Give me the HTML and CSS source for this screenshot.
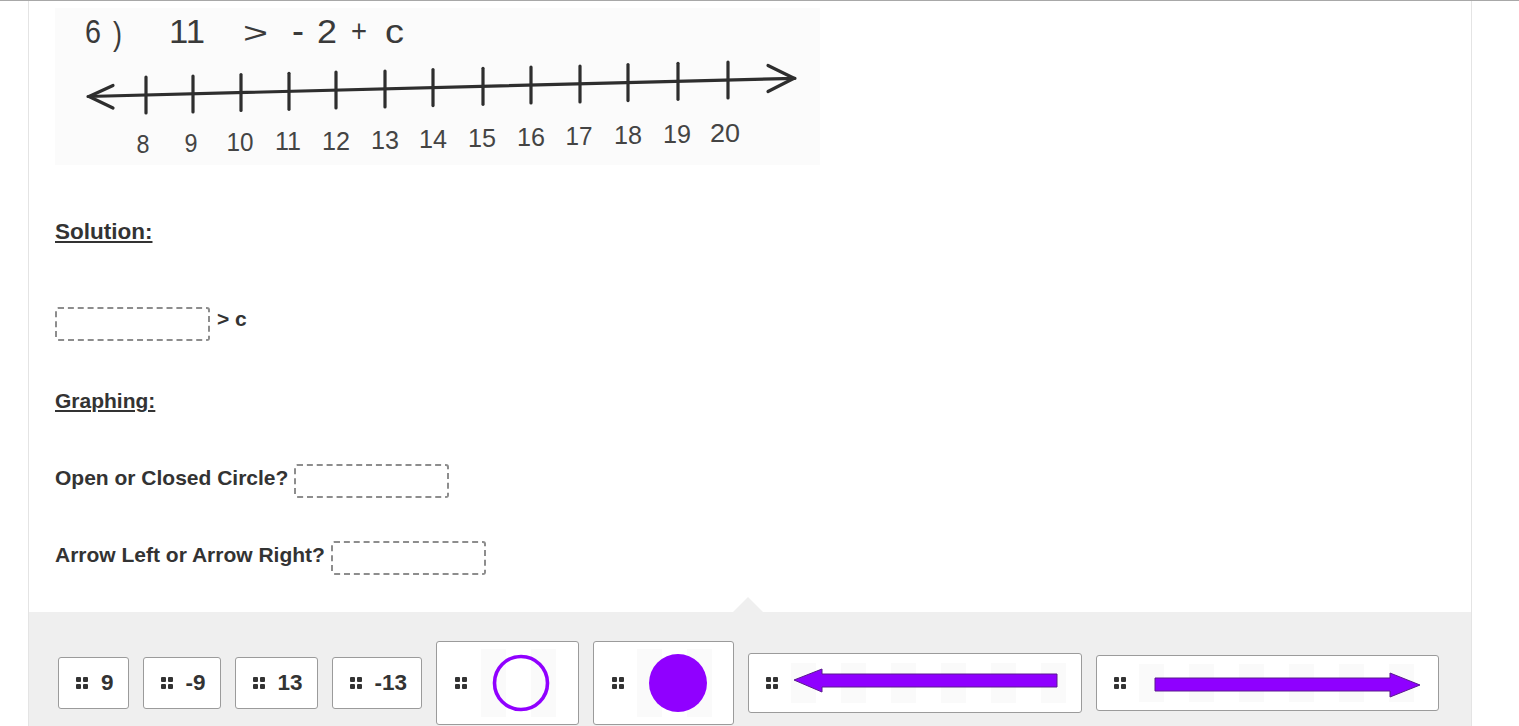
FILE: index.html
```html
<!DOCTYPE html>
<html>
<head>
<meta charset="utf-8">
<link rel="stylesheet" href="styles.css">
</head>
<body>
<div class="page">
  <div class="panel">
    <div class="content">
      <svg class="numline" width="765" height="157" viewBox="0 0 765 157">
        <rect x="0" y="0" width="765" height="157" fill="#fbfbfb"/>
        <g font-family="Liberation Sans, Arial, sans-serif" fill="#3a3a3a">
          <text x="30" y="35" font-size="34" textLength="16" lengthAdjust="spacingAndGlyphs">6</text>
          <text x="58" y="37" font-size="34" textLength="9" lengthAdjust="spacingAndGlyphs">)</text>
          <text x="114" y="35" font-size="34" textLength="36" lengthAdjust="spacingAndGlyphs">11</text>
          <text x="188" y="35" font-size="30" textLength="25" lengthAdjust="spacingAndGlyphs">&gt;</text>
          <text x="237" y="35" font-size="36">-</text>
          <text x="262" y="35" font-size="34" textLength="20" lengthAdjust="spacingAndGlyphs">2</text>
          <text x="296" y="34" font-size="32" textLength="16" lengthAdjust="spacingAndGlyphs">+</text>
          <text x="330" y="35" font-size="34" textLength="19" lengthAdjust="spacingAndGlyphs">c</text>
        </g>
        <g stroke="#2e2e2e" stroke-width="3.2" fill="none" stroke-linecap="round" stroke-linejoin="round">
          <path d="M33 88.5 L740 70.3"/>
          <path d="M58 77.5 L34 88.5 L58 100"/>
          <path d="M713 57.5 L739 70.3 L713 83.5"/>
          <path d="M91 69 V105"/>
          <path d="M138 68 V104"/>
          <path d="M186 66.5 V102.5"/>
          <path d="M234 65.3 V101.3"/>
          <path d="M281 64 V100"/>
          <path d="M330 63 V99"/>
          <path d="M378 61.6 V97.6"/>
          <path d="M428 60.3 V96.3"/>
          <path d="M476 59 V95"/>
          <path d="M525 58 V94"/>
          <path d="M573 56.6 V92.6"/>
          <path d="M623 55.3 V91.3"/>
          <path d="M673 54 V90"/>
        </g>
        <g font-family="Liberation Sans, Arial, sans-serif" font-size="26" fill="#444" text-anchor="middle">
          <text x="88" y="145" textLength="13" lengthAdjust="spacingAndGlyphs">8</text>
          <text x="136" y="144" textLength="13" lengthAdjust="spacingAndGlyphs">9</text>
          <text x="185" y="143" textLength="27" lengthAdjust="spacingAndGlyphs">10</text>
          <text x="233" y="142" textLength="26" lengthAdjust="spacingAndGlyphs">11</text>
          <text x="281" y="141.5" textLength="28" lengthAdjust="spacingAndGlyphs">12</text>
          <text x="330" y="140.5" textLength="28" lengthAdjust="spacingAndGlyphs">13</text>
          <text x="378" y="139.5" textLength="28" lengthAdjust="spacingAndGlyphs">14</text>
          <text x="427" y="138.5" textLength="28" lengthAdjust="spacingAndGlyphs">15</text>
          <text x="476" y="137.5" textLength="28" lengthAdjust="spacingAndGlyphs">16</text>
          <text x="524" y="136.5" textLength="27" lengthAdjust="spacingAndGlyphs">17</text>
          <text x="573" y="135.5" textLength="28" lengthAdjust="spacingAndGlyphs">18</text>
          <text x="622" y="134.5" textLength="28" lengthAdjust="spacingAndGlyphs">19</text>
          <text x="670" y="133.5" textLength="30" lengthAdjust="spacingAndGlyphs">20</text>
        </g>
      </svg>

      <div class="heading solution">Solution:</div>

      <div class="row row-solution">
        <span class="dropbox"></span>
        <span class="label after">&gt; c</span>
      </div>

      <div class="heading graphing">Graphing:</div>

      <div class="row row-open">
        <span class="label">Open or Closed Circle?</span>
        <span class="dropbox"></span>
      </div>

      <div class="row row-arrow">
        <span class="label">Arrow Left or Arrow Right?</span>
        <span class="dropbox"></span>
      </div>
    </div>

    <div class="tray">
      <div class="token text-token"><span class="grip"><i></i><i></i><i></i><i></i></span><span class="val">9</span></div>
      <div class="token text-token"><span class="grip"><i></i><i></i><i></i><i></i></span><span class="val">-9</span></div>
      <div class="token text-token"><span class="grip"><i></i><i></i><i></i><i></i></span><span class="val">13</span></div>
      <div class="token text-token"><span class="grip"><i></i><i></i><i></i><i></i></span><span class="val">-13</span></div>

      <div class="token img-token circle-token">
        <span class="grip"><i></i><i></i><i></i><i></i></span>
        <span class="pic pic-open">
          <svg width="84" height="68" viewBox="0 0 84 68"><circle cx="40" cy="34" r="26.5" fill="none" stroke="#9000ff" stroke-width="3.6"/></svg>
        </span>
      </div>
      <div class="token img-token circle-token closed">
        <span class="grip"><i></i><i></i><i></i><i></i></span>
        <span class="pic pic-closed">
          <svg width="83" height="68" viewBox="0 0 83 68"><circle cx="41" cy="34" r="29" fill="#9000ff"/></svg>
        </span>
      </div>
      <div class="token img-token arrow-left">
        <span class="grip"><i></i><i></i><i></i><i></i></span>
        <span class="pic pic-left">
          <svg width="276" height="40" viewBox="0 0 276 40"><path d="M3 17 L31 6 L31 11 L266 11 L266 24 L31 24 L31 29 Z" fill="#8f00ff" stroke="#5b1a8e" stroke-width="1" stroke-linejoin="round"/></svg>
        </span>
      </div>
      <div class="token img-token arrow-right">
        <span class="grip"><i></i><i></i><i></i><i></i></span>
        <span class="pic pic-right">
          <svg width="286" height="38" viewBox="0 0 286 38"><path d="M16 14 L251 14 L251 9 L281 21 L251 33 L251 27 L16 27 Z" fill="#8f00ff" stroke="#5b1a8e" stroke-width="1" stroke-linejoin="round"/></svg>
        </span>
      </div>
    </div>
  </div>
</div>
</body>
</html>
```

FILE: styles.css
```css
html, body {
  margin: 0;
  padding: 0;
  background: #fff;
}

body {
  font-family: "Liberation Sans", Arial, sans-serif;
  color: #333;
  overflow: hidden;
}

.page {
  border-top: 1px solid #a8a8a8;
  height: 725px;
}

.panel {
  margin-left: 28px;
  width: 1442px;
  border-left: 1px solid #e4e4e4;
  border-right: 1px solid #e4e4e4;
  height: 725px;
  display: flex;
  flex-direction: column;
}

.content {
  padding: 7px 0 0 26px;
}

.numline {
  display: block;
}

.heading {
  font-size: 21px;
  font-weight: bold;
  line-height: 24px;
  text-decoration: underline;
  text-underline-offset: 2px;
}

.solution {
  margin-top: 55px;
  font-size: 22.5px;
}

.graphing {
  margin-top: 48px;
}

.row {
  display: flex;
  align-items: flex-start;
}

.label {
  font-size: 21px;
  font-weight: bold;
  line-height: 24px;
  margin-top: 2px;
}

.label.after {
  margin-top: 0;
  margin-left: 7px;
}

.row-solution {
  margin-top: 63px;
}

.row-open {
  margin-top: 51px;
}

.row-arrow {
  margin-top: 43px;
}

.row-open .dropbox,
.row-arrow .dropbox {
  margin-left: 6px;
}

.dropbox {
  display: block;
  box-sizing: border-box;
  width: 155px;
  height: 34px;
  border: 2px dashed #8d8d8d;
  border-radius: 3px;
  background: #fff;
}

.tray {
  position: relative;
  margin-top: 37px;
  flex: 1;
  background: #efefef;
  padding: 28px 0 0 29px;
  display: flex;
  align-items: center;
  align-self: stretch;
  gap: 14px;
  align-content: flex-start;
  height: 84px;
}

.tray::before {
  content: "";
  position: absolute;
  top: -15px;
  left: 704px;
  border-left: 15px solid transparent;
  border-right: 15px solid transparent;
  border-bottom: 15px solid #efefef;
}

.token {
  box-sizing: border-box;
  display: flex;
  align-items: center;
  background: #fff;
  border: 1px solid #9b9b9b;
  border-radius: 3px;
  flex: none;
}

.text-token {
  height: 52px;
  padding: 0 14px 0 17px;
}

.val {
  font-size: 22.5px;
  font-weight: bold;
  line-height: 24px;
  margin-left: 13px;
}

.grip {
  display: grid;
  grid-template-columns: 5px 5px;
  grid-template-rows: 5px 5px;
  gap: 2px;
  flex: none;
}

.grip i {
  display: block;
  background: #333;
  border-radius: 1px;
}

.pic {
  display: block;
  flex: none;
  background-color: #fff;
  background-image:
    linear-gradient(90deg, rgba(0,0,0,0.018) 50%, transparent 50%);
  background-size: 50px 100%;
}

.pic svg {
  display: block;
}

.img-token {
  padding: 7px 13px 7px 18px;
}

.circle-token .pic {
  margin-left: 14px;
}

.circle-token.closed .pic {
  margin-left: 13px;
}

.arrow-left {
  height: 60px;
  padding: 0 14px 0 17px;
}

.arrow-left .pic {
  margin-left: 13px;
}

.arrow-right {
  height: 56px;
  padding: 0 13px 0 17px;
}

.arrow-right .pic {
  margin-left: 13px;
}
```
